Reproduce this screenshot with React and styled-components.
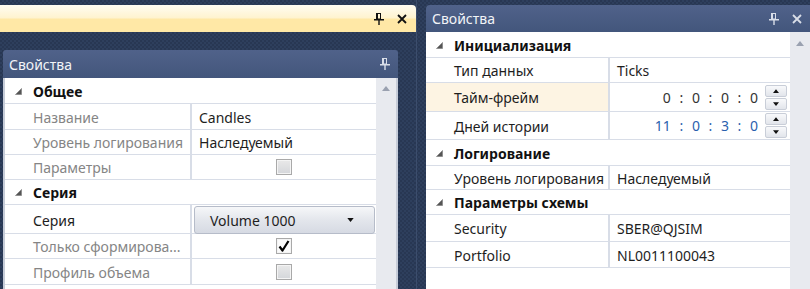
import React from 'react';
import styled, { createGlobalStyle } from 'styled-components';

const GlobalStyle = createGlobalStyle`
  html, body {
    margin: 0;
    padding: 0;
  }
  body {
    font-family: "Noto Sans", "Liberation Sans", sans-serif;
    font-size: 14px;
    color: #1e1e1e;
  }
`;

const Screen = styled.div`
  display: flex;
  width: 810px;
  height: 289px;
  overflow: hidden;
  background-color: #2a3a57;
  background-image: repeating-conic-gradient(#2e3f5d 0 25%, #283753 0 50%);
  background-size: 4px 4px;
`;

const LeftWindow = styled.div`
  display: flex;
  flex-direction: column;
  width: 417px;
  padding-top: 5px;
  box-sizing: border-box;
  border-right: 1px solid #3c4d6c;
`;

const ActiveCaption = styled.div`
  display: flex;
  align-items: center;
  justify-content: flex-end;
  gap: 13px;
  height: 27px;
  padding-right: 9px;
  box-sizing: border-box;
  border-radius: 0 4px 0 0;
  background: linear-gradient(#fffcf2 0%, #fff3cf 48%, #ffe8a6 52%, #ffe8a6 100%);
`;

const LeftBody = styled.div`
  display: flex;
  flex: 1;
  padding: 18px 18px 0 3px;
  min-height: 0;
`;

const Splitter = styled.div`
  width: 9px;
`;

const RightWindow = styled.div`
  display: flex;
  flex: 1;
  flex-direction: column;
  padding-top: 5px;
  min-width: 0;
`;

const Panel = styled.div`
  display: flex;
  flex: 1;
  flex-direction: column;
  min-height: 0;
`;

const PanelHeader = styled.div`
  display: flex;
  align-items: center;
  gap: 13px;
  height: ${(p) => p.$h}px;
  padding: 0 8px 0 6px;
  box-sizing: border-box;
  border-radius: ${(p) => (p.$right ? '4px 0 0 0' : '3px 3px 0 0')};
  background: linear-gradient(#50628a, #43567c);
  color: #f2f4f8;
  font-size: 14px;
`;

const HeaderTitle = styled.span`
  flex: 1;
`;

const PanelBody = styled.div`
  display: flex;
  flex: 1;
  min-height: 0;
  background: #ffffff;
  border: ${(p) => (p.$framed ? '2px solid #c6ccd8' : 'none')};
  border-top: none;
  border-bottom: none;
`;

const Grid = styled.div`
  flex: 1;
  background: #ffffff;
`;

const Row = styled.div`
  display: grid;
  grid-template-columns: ${(p) => p.$label}px 1fr;
  height: ${(p) => p.$h || 25}px;
  box-sizing: border-box;
  border-bottom: 1px solid #d8dde7;
`;

const LabelCell = styled.div`
  display: flex;
  align-items: center;
  padding: 1px 0 0 28px;
  overflow: hidden;
  white-space: nowrap;
  color: ${(p) => (p.$muted ? '#858585' : '#1e1e1e')};
  background: ${(p) => (p.$hl ? '#fdf4e3' : 'transparent')};
`;

const ValueCell = styled.div`
  display: flex;
  align-items: center;
  justify-content: ${(p) => p.$align || 'flex-start'};
  padding: ${(p) => p.$pad || '1px 0 0 7px'};
  border-left: 2px solid #d8dde7;
  white-space: nowrap;
  min-width: 0;
`;

const CategoryRow = styled.div`
  display: flex;
  align-items: center;
  height: ${(p) => p.$h || 26}px;
  padding-top: 1px;
  box-sizing: border-box;
  border-bottom: 1px solid #d8dde7;
  font-weight: 700;
  color: #111;
`;

const Expander = styled.span`
  display: flex;
  width: 28px;
  padding-left: 10px;
  box-sizing: border-box;
`;

const ScrollBar = styled.div`
  width: 20px;
  display: flex;
  justify-content: center;
  padding-top: ${(p) => p.$top}px;
  background: #e8eaef;
`;

const Combo = styled.div`
  display: flex;
  align-items: center;
  justify-content: space-between;
  flex: 1;
  height: 26px;
  margin: 0 1px 0 -5px;
  padding: 0 20px 0 15px;
  border: 1px solid #b6bcc9;
  border-radius: 3px;
  background: linear-gradient(#f6f7f9, #e3e6ec 50%, #d6dae3);
  color: #1e1e1e;
`;

const CheckBox = styled.div`
  display: flex;
  align-items: center;
  justify-content: center;
  width: 16px;
  height: 16px;
  box-sizing: border-box;
  border: 1px solid #a9a9a9;
  box-shadow: inset 0 0 0 1px #f4f4f4;
  background: ${(p) => (p.$checked ? '#fafafa' : 'linear-gradient(#e9e9e9, #d4d6da)')};
`;

const TimeText = styled.span`
  color: ${(p) => (p.$blue ? '#2a5fae' : '#333')};
  word-spacing: 5px;
  margin-right: 7px;
`;

const SpinButtons = styled.div`
  display: flex;
  flex-direction: column;
  gap: 1px;
`;

const SpinButton = styled.div`
  display: flex;
  align-items: center;
  justify-content: center;
  width: 22px;
  height: 12px;
  box-sizing: border-box;
  border: 1px solid #c9ced8;
  border-radius: 2px;
  background: linear-gradient(#f8f9fb, #e2e5eb);
`;

const Pin = ({ color }) => (
  <svg width="10" height="12" viewBox="0 0 10 12">
    <rect x="2" y="0" width="2" height="6" fill={color} />
    <rect x="2.5" y="0.5" width="4" height="5.5" fill="none" stroke={color} />
    <rect x="0" y="6" width="10" height="1.5" fill={color} />
    <rect x="4.3" y="7" width="1.4" height="5" fill={color} />
  </svg>
);

const Close = ({ color }) => (
  <svg width="10" height="10" viewBox="0 0 10 10">
    <path d="M1 1 L9 9 M9 1 L1 9" stroke={color} strokeWidth="1.8" />
  </svg>
);

const Tick = () => (
  <svg width="12" height="12" viewBox="0 0 12 12">
    <path d="M1.5 6.5 L4.5 10.5 L10.5 1" fill="none" stroke="#000" strokeWidth="2.2" strokeLinejoin="round" />
  </svg>
);

const Triangle = () => (
  <svg width="7" height="7" viewBox="0 0 7 7">
    <polygon points="6.5,0.5 6.5,6.5 0.5,6.5" fill="#555" stroke="#888" strokeWidth="0.8" />
  </svg>
);

const UpArrow = ({ color = '#9aa1b0', w = 8, h = 5 }) => (
  <svg width={w} height={h} viewBox="0 0 8 5">
    <polygon points="0,5 4,0 8,5" fill={color} />
  </svg>
);

const DownArrow = ({ color = '#111', w = 8, h = 5 }) => (
  <svg width={w} height={h} viewBox="0 0 8 5">
    <polygon points="0,0 8,0 4,5" fill={color} />
  </svg>
);

function Category({ title, h }) {
  return (
    <CategoryRow $h={h}>
      <Expander>
        <Triangle />
      </Expander>
      {title}
    </CategoryRow>
  );
}

function Spin({ value, blue }) {
  return (
    <>
      <TimeText $blue={blue}>{value}</TimeText>
      <SpinButtons>
        <SpinButton>
          <UpArrow color="#111" w={6} h={4} />
        </SpinButton>
        <SpinButton>
          <DownArrow w={6} h={4} />
        </SpinButton>
      </SpinButtons>
    </>
  );
}

export default function App() {
  const L = 185;
  const R = 182;
  return (
    <Screen>
      <GlobalStyle />
      <LeftWindow>
        <ActiveCaption>
          <Pin color="#111" />
          <Close color="#111" />
        </ActiveCaption>
        <LeftBody>
          <Panel>
            <PanelHeader $h={28}>
              <HeaderTitle>Свойства</HeaderTitle>
              <Pin color="#d9dee8" />
            </PanelHeader>
            <PanelBody $framed>
              <Grid>
                <Category title="Общее" />
                <Row $label={L} $h={26}>
                  <LabelCell $muted>Название</LabelCell>
                  <ValueCell>Candles</ValueCell>
                </Row>
                <Row $label={L}>
                  <LabelCell $muted>Уровень логирования</LabelCell>
                  <ValueCell>Наследуемый</ValueCell>
                </Row>
                <Row $label={L}>
                  <LabelCell $muted>Параметры</LabelCell>
                  <ValueCell $align="center" $pad="0">
                    <CheckBox />
                  </ValueCell>
                </Row>
                <Category title="Серия" h={25} />
                <Row $label={L} $h={29}>
                  <LabelCell>Серия</LabelCell>
                  <ValueCell>
                    <Combo>
                      Volume 1000
                      <DownArrow w={7} h={4} />
                    </Combo>
                  </ValueCell>
                </Row>
                <Row $label={L}>
                  <LabelCell $muted>Только сформирова...</LabelCell>
                  <ValueCell $align="center" $pad="0">
                    <CheckBox $checked>
                      <Tick />
                    </CheckBox>
                  </ValueCell>
                </Row>
                <Row $label={L} $h={26}>
                  <LabelCell $muted>Профиль объема</LabelCell>
                  <ValueCell $align="center" $pad="0">
                    <CheckBox />
                  </ValueCell>
                </Row>
              </Grid>
              <ScrollBar $top={8}>
                <UpArrow />
              </ScrollBar>
            </PanelBody>
          </Panel>
        </LeftBody>
      </LeftWindow>
      <Splitter />
      <RightWindow>
        <Panel>
          <PanelHeader $h={27} $right>
            <HeaderTitle>Свойства</HeaderTitle>
            <Pin color="#d9dee8" />
            <Close color="#d9dee8" />
          </PanelHeader>
          <PanelBody>
            <Grid>
              <Category title="Инициализация" />
              <Row $label={R}>
                <LabelCell>Тип данных</LabelCell>
                <ValueCell>Ticks</ValueCell>
              </Row>
              <Row $label={R} $h={29}>
                <LabelCell $hl>Тайм-фрейм</LabelCell>
                <ValueCell $align="flex-end" $pad="0 3px 0 0">
                  <Spin value="0 : 0 : 0 : 0" />
                </ValueCell>
              </Row>
              <Row $label={R} $h={28}>
                <LabelCell>Дней истории</LabelCell>
                <ValueCell $align="flex-end" $pad="0 3px 0 0">
                  <Spin value="11 : 0 : 3 : 0" blue />
                </ValueCell>
              </Row>
              <Category title="Логирование" />
              <Row $label={R} $h={24}>
                <LabelCell>Уровень логирования</LabelCell>
                <ValueCell>Наследуемый</ValueCell>
              </Row>
              <Category title="Параметры схемы" h={25} />
              <Row $label={R} $h={27}>
                <LabelCell>Security</LabelCell>
                <ValueCell>SBER@QJSIM</ValueCell>
              </Row>
              <Row $label={R} $h={26}>
                <LabelCell>Portfolio</LabelCell>
                <ValueCell>NL0011100043</ValueCell>
              </Row>
            </Grid>
            <ScrollBar $top={9}>
              <UpArrow />
            </ScrollBar>
          </PanelBody>
        </Panel>
      </RightWindow>
    </Screen>
  );
}
